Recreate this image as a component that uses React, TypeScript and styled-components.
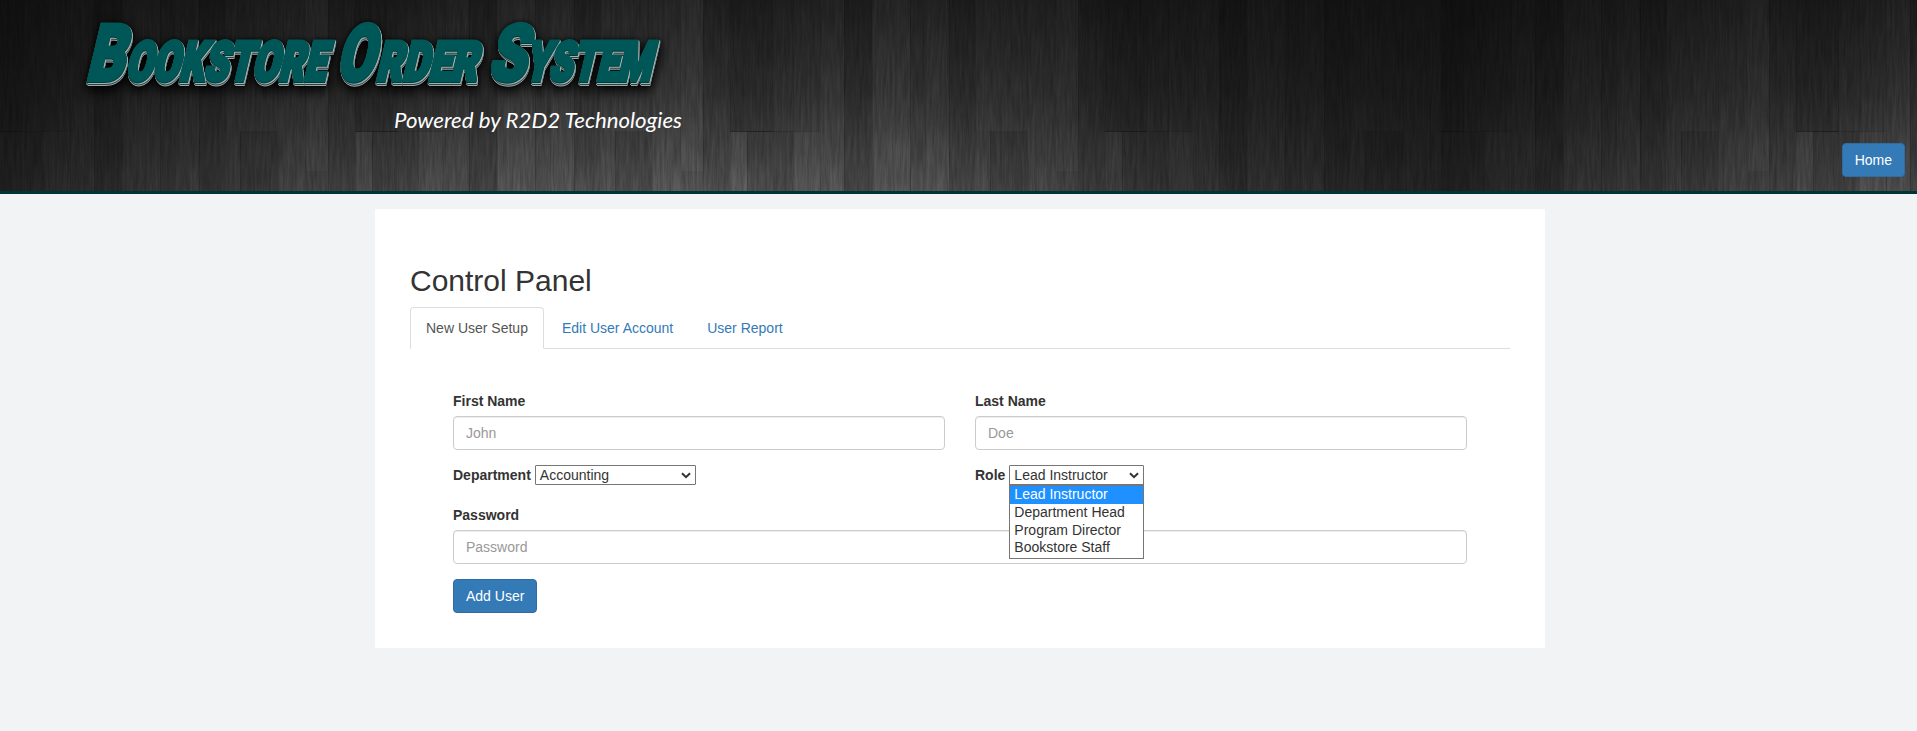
import React from 'react';
import styled, { createGlobalStyle } from 'styled-components';

const GlobalStyle = createGlobalStyle`
  * { box-sizing: border-box; }
  body {
    margin: 0;
    background: #f1f3f5;
    color: #333;
    font: 14px/20px "Liberation Sans", Arial, sans-serif;
  }
`;

const Header = styled.header`
  height: 194px;
  border-bottom: 3px solid #003535;
  display: grid;
  background: #222;
  overflow: hidden;
  > * { grid-area: 1 / 1; }
`;

const Wood = styled.svg`
  display: block;
  width: 100%;
  height: 191px;
`;

const Logo = styled.svg`
  display: block;
  width: 760px;
  height: 191px;
  overflow: visible;
`;

const Title = styled.g`
  font: 900 78px Roboto, "Liberation Sans", sans-serif;
  fill: #005757;
  stroke: #005757;
  stroke-width: 4px;
  filter: drop-shadow(0 1px 0 #003a3a) drop-shadow(1px 1px 0 #a4b0b0)
    drop-shadow(0 1px 0 #2c4040) drop-shadow(0 1px 0 #9aa8a8)
    drop-shadow(0 0 2px rgba(0, 0, 0, 0.7)) drop-shadow(0 5px 6px rgba(0, 0, 0, 0.9));
`;

const Tagline = styled.text`
  font: italic 400 21px Lato, "Liberation Sans", sans-serif;
  fill: #fff;
`;

const Button = styled.button`
  height: 34px;
  padding: 6px 12px;
  border: 1px solid #2e6da4;
  border-radius: 4px;
  background: #337ab7;
  color: #fff;
  font: inherit;
`;

const HeaderActions = styled.div`
  justify-self: end;
  align-self: end;
  margin: 0 12px 14px 0;
`;

const Panel = styled.main`
  width: 1170px;
  height: 439px;
  margin: 15px auto 0 375px;
  padding: 55px 35px 0;
  background: #fff;
`;

const Heading = styled.h2`
  margin: 0 0 10px;
  font-size: 30px;
  font-weight: 400;
  line-height: 33px;
`;

const Tabs = styled.nav`
  display: flex;
  height: 42px;
  border-bottom: 1px solid #ddd;
`;

const Tab = styled.a<{ $active?: boolean }>`
  height: 42px;
  margin-right: 2px;
  padding: 10px 15px;
  border: 1px solid ${(p) => (p.$active ? '#ddd' : 'transparent')};
  border-bottom-color: ${(p) => (p.$active ? '#fff' : 'transparent')};
  border-radius: 4px 4px 0 0;
  color: ${(p) => (p.$active ? '#555' : '#337ab7')};
`;

const Form = styled.form`
  display: grid;
  grid-template-columns: 1fr 1fr;
  column-gap: 30px;
  padding: 42px 43px 0;
`;

const Field = styled.div<{ $wide?: boolean }>`
  grid-column: ${(p) => (p.$wide ? '1 / -1' : 'auto')};
  height: 74px;
`;

const Label = styled.label`
  display: block;
  margin-bottom: 5px;
  font-weight: 700;
`;

const Input = styled.input`
  display: block;
  width: 100%;
  height: 34px;
  padding: 6px 12px;
  border: 1px solid #ccc;
  border-radius: 4px;
  box-shadow: inset 0 1px 1px rgba(0, 0, 0, 0.075);
  font: inherit;
  &::placeholder { color: #999; opacity: 1; }
`;

const SelectRow = styled.div`
  display: flex;
  align-items: flex-start;
  height: 40px;
  gap: 4px;
`;

const Select = styled.div<{ $width: number }>`
  position: relative;
  width: ${(p) => p.$width}px;
  height: 20px;
  padding: 0 4px;
  border: 1px solid #767676;
  border-radius: 1px;
  display: flex;
  justify-content: space-between;
  align-items: center;
  line-height: 18px;
`;

const Menu = styled.div`
  position: absolute;
  top: 18px;
  left: -1px;
  width: 135px;
  height: 75px;
  border: 1px solid #767676;
  border-top-width: 2px;
  background: #fff;
`;

const Option = styled.div<{ $selected?: boolean }>`
  height: ${(p) => (p.$selected ? '18px' : '17.6px')};
  padding-left: 4px;
  line-height: 17px;
  color: ${(p) => (p.$selected ? '#fff' : '#333')};
  background: ${(p) => (p.$selected ? '#1e90ff' : 'transparent')};
`;

const Chevron = () => (
  <svg width="10" height="7" viewBox="0 0 10 7">
    <path d="M1 1.2 L5 5.2 L9 1.2" fill="none" stroke="#333" strokeWidth="2" />
  </svg>
);

/* Each board: left edge, width, top, height and lightness shift within one repeat. */
const boards = [
  [0, 42, 0, 131, -0.16], [42, 21, 0, 131, -0.08], [63, 27, 0, 131, -0.03],
  [0, 17, 131, 60, 0.07], [17, 46, 131, 60, -0.1], [63, 27, 131, 60, 0.05],
  [90, 24, 0, 191, 0.02], [114, 28, 0, 191, -0.14], [142, 38, 0, 191, 0.05],
  [180, 15, 0, 191, -0.03], [195, 24, 0, 191, 0.03], [219, 26, 0, 191, -0.1],
  [245, 52, 0, 131, 0.02], [260, 37, 131, 60, -0.1], [297, 28, 0, 191, 0.04],
  [325, 23, 0, 171, 0.08], [348, 27, 0, 191, -0.07],
];

const BoardRun = ({ offset, width }: { offset: number; width: number }) => (
  <svg x={offset} width={width} height="191">
    <rect width="100%" height="191" fill="url(#planks)" />
    <rect width="100%" height="191" fill="url(#sides)" />
  </svg>
);

const WoodBackdrop = () => (
  <Wood>
    <defs>
      <filter id="grain" x="0" y="0" width="100%" height="100%">
        <feTurbulence type="fractalNoise" baseFrequency="0.4 0.03" numOctaves="3" seed="4" />
        <feColorMatrix values="0 0 0 0 0  0 0 0 0 0  0 0 0 0 0  1.3 0 0 0 -0.3" />
      </filter>
      <linearGradient id="fall" x2="0" y2="1">
        <stop offset="0" stopColor="#242424" />
        <stop offset="0.5" stopColor="#393939" />
        <stop offset="1" stopColor="#5c5c5c" />
      </linearGradient>
      <linearGradient id="sides" gradientUnits="userSpaceOnUse" x1="0" x2="1441">
        <stop offset="0" stopColor="#0c0c0c" stopOpacity="0.68" />
        <stop offset="0.18" stopColor="#0c0c0c" stopOpacity="0.32" />
        <stop offset="0.38" stopColor="#0c0c0c" stopOpacity="0.02" />
        <stop offset="0.63" stopColor="#0c0c0c" stopOpacity="0.02" />
        <stop offset="0.84" stopColor="#0c0c0c" stopOpacity="0.48" />
        <stop offset="1" stopColor="#0c0c0c" stopOpacity="0.68" />
      </linearGradient>
      <pattern id="planks" width="375" height="191" patternUnits="userSpaceOnUse" x="355">
        {boards.map(([x, w, y, h, v]) => (
          <g key={`${x}-${y}`}>
            <rect x={x} y={y} width={w} height={h} fill={v > 0 ? '#fff' : '#000'} opacity={v > 0 ? v * 0.5 : -v} />
            <rect x={x} y={y} width="1" height={h} fill="#000" opacity="0.12" />
          </g>
        ))}
        <rect y="131" width="42" height="1" fill="#000" opacity="0.4" />
        <rect x="42" y="131" width="48" height="1" fill="#000" opacity="0.15" />
      </pattern>
    </defs>
    <rect width="100%" height="191" fill="url(#fall)" />
    <BoardRun offset={0} width={1441} />
    <BoardRun offset={1441} width={476} />
    <rect width="100%" height="191" filter="url(#grain)" opacity="0.3" />
  </Wood>
);

const words = [
  { initial: 'B', x: 86, w: 38, rest: 'OOKSTORE', rx: 125.5, rw: 200 },
  { initial: 'O', x: 336, w: 38, rest: 'RDER', rx: 376, rw: 101 },
  { initial: 'S', x: 488, w: 38, rest: 'YSTEM', rx: 525, rw: 126 },
];

export default function App() {
  return (
    <>
      <GlobalStyle />
      <Header>
        <WoodBackdrop />
        <Logo>
          <Title>
            <g transform="translate(18.5 0) skewX(-13.5)">
              {words.map((word) => (
                <text key={word.initial} y="80">
                  <tspan x={word.x} textLength={word.w} lengthAdjust="spacingAndGlyphs">{word.initial}</tspan>
                  <tspan x={word.rx} textLength={word.rw} lengthAdjust="spacingAndGlyphs" fontSize="54">{word.rest}</tspan>
                </text>
              ))}
            </g>
          </Title>
          <Tagline x="394" y="128" textLength="288" lengthAdjust="spacingAndGlyphs">Powered by R2D2 Technologies</Tagline>
        </Logo>
        <HeaderActions><Button>Home</Button></HeaderActions>
      </Header>
      <Panel>
        <Heading>Control Panel</Heading>
        <Tabs>
          <Tab $active>New User Setup</Tab>
          <Tab>Edit User Account</Tab>
          <Tab>User Report</Tab>
        </Tabs>
        <Form>
          <Field>
            <Label>First Name</Label>
            <Input placeholder="John" />
          </Field>
          <Field>
            <Label>Last Name</Label>
            <Input placeholder="Doe" />
          </Field>
          <SelectRow>
            <Label>Department</Label>
            <Select $width={161}>Accounting<Chevron /></Select>
          </SelectRow>
          <SelectRow>
            <Label>Role</Label>
            <Select $width={135}>
              Lead Instructor<Chevron />
              <Menu>
                <Option $selected>Lead Instructor</Option>
                <Option>Department Head</Option>
                <Option>Program Director</Option>
                <Option>Bookstore Staff</Option>
              </Menu>
            </Select>
          </SelectRow>
          <Field $wide>
            <Label>Password</Label>
            <Input placeholder="Password" />
          </Field>
          <div><Button type="button">Add User</Button></div>
        </Form>
      </Panel>
    </>
  );
}
